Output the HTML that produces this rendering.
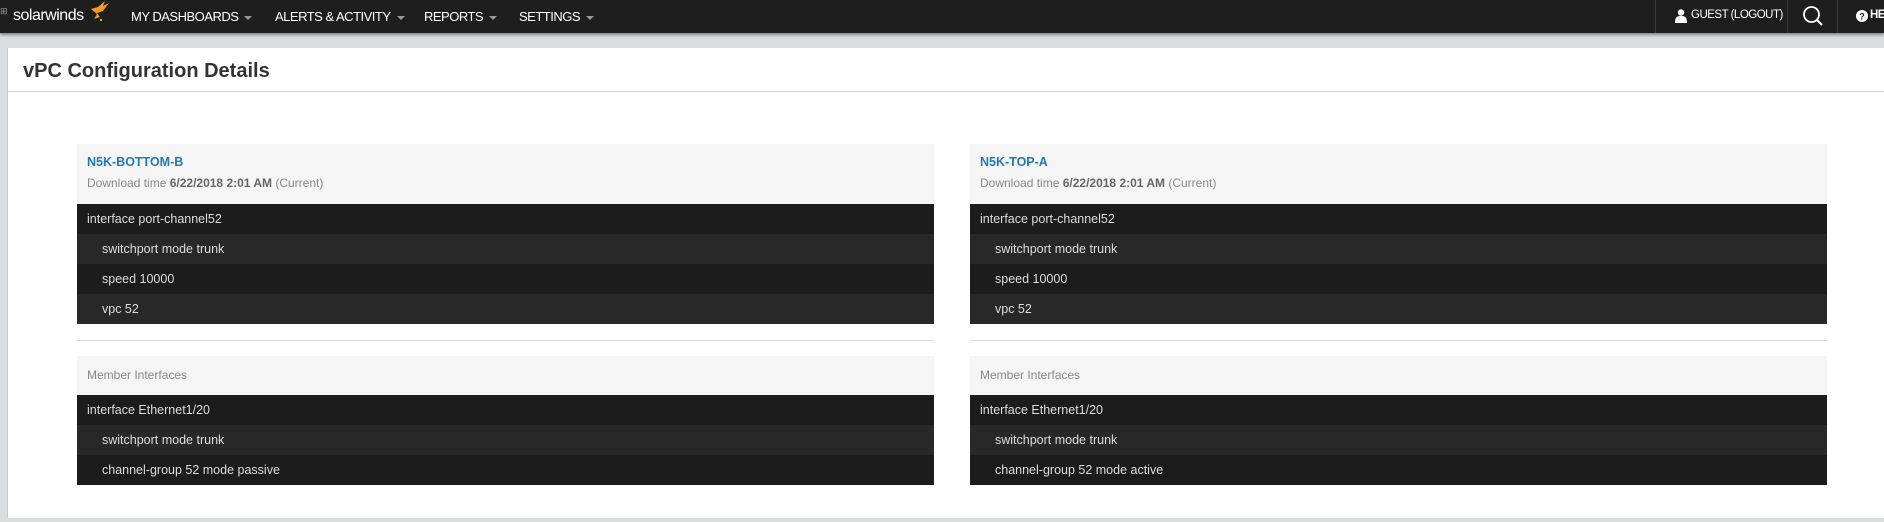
<!DOCTYPE html>
<html><head><meta charset="utf-8"><style>
*{margin:0;padding:0;box-sizing:border-box}
body{width:1884px;height:522px;overflow:hidden;background:#dcdddf;font-family:"Liberation Sans",sans-serif;position:relative}
.nav{position:absolute;left:0;top:0;width:1884px;height:33px;background:#1e1e1e;color:#fff;font-size:13px;box-shadow:0 2px 3px rgba(0,0,0,.4)}
.nav span{position:absolute;top:9px;letter-spacing:-0.5px}
.car{display:inline-block;width:0;height:0;border-left:4px solid transparent;border-right:4px solid transparent;border-top:4px solid #999;margin-left:6px;vertical-align:middle}
.sep{position:absolute;top:0;width:1px;height:33px;background:#3a3a3a}
.card{position:absolute;left:7px;top:48px;width:1877px;height:470px;background:#fff;border-left:1px solid #ccc}
.title{position:absolute;left:15px;top:12px;font-size:20px;font-weight:bold;color:#333}
.hr{position:absolute;left:0;top:43px;width:100%;height:1px;background:#d4d4d4}
.box{position:absolute;top:96px;width:857px}
.hd{height:60px;background:#f5f5f5;padding:11px 10px;font-size:12px;color:#888}
.hd b.n{color:#1f7ab5;font-size:12.5px;display:block;margin-bottom:7px}
.hd b{color:#666}
.row{height:30px;line-height:30px;font-size:12.5px;color:#ddd;padding-left:10px;background:#1c1c1c}
.row.a{background:#282828}
.row.i{padding-left:25px}
.line{height:1px;background:#d6d6d6;margin:16px 0 15px}
.mh{height:39px;background:#f5f5f5;line-height:39px;font-size:12px;color:#888;padding-left:10px}
</style></head><body>
<div class="nav">
<span style="left:0;top:6px;font-size:9px;color:#999">⊞</span>
<span style="left:13px;top:7px;font-size:16px">solarwinds</span>
<svg style="position:absolute;left:88px;top:1px" width="22" height="22" viewBox="0 0 22 22"><path d="M3 8 L10 6 L17 0 L15 5 L21 2 L15 10 L9 12 L12 16 L6 18 L9 13 Z" fill="#f39a1f"/><circle cx="13" cy="19" r="1.2" fill="#f39a1f"/></svg>
<span style="left:131px">MY DASHBOARDS<i class="car"></i></span>
<span style="left:275px">ALERTS &amp; ACTIVITY<i class="car"></i></span>
<span style="left:424px">REPORTS<i class="car"></i></span>
<span style="left:519px">SETTINGS<i class="car"></i></span>
<div class="sep" style="left:1655px"></div>
<svg style="position:absolute;left:1675px;top:9px" width="12" height="14" viewBox="0 0 12 14"><circle cx="6" cy="3.5" r="3.2" fill="#fff"/><path d="M0 14 C0 8 2 7 6 7 C10 7 12 8 12 14Z" fill="#fff"/></svg>
<span style="left:1691px;font-size:11.5px">GUEST (LOGOUT)</span>
<div class="sep" style="left:1787px"></div>
<svg style="position:absolute;left:1802px;top:5px" width="22" height="22" viewBox="0 0 22 22"><circle cx="9.5" cy="9.5" r="7.5" fill="none" stroke="#fff" stroke-width="1.8"/><path d="M15 15 L20 20" stroke="#fff" stroke-width="2"/></svg>
<div class="sep" style="left:1837px"></div>
<svg style="position:absolute;left:1856px;top:10px" width="12" height="12" viewBox="0 0 12 12"><circle cx="6" cy="6" r="6" fill="#fff"/><text x="6" y="9.5" font-size="9" font-weight="bold" text-anchor="middle" fill="#1e1e1e" font-family="Liberation Sans">?</text></svg>
<span style="left:1870px;font-size:11.5px;font-weight:bold">HE</span>
</div>
<div class="card">
<div class="title">vPC Configuration Details</div>
<div class="hr"></div>
<div class="box" style="left:69px">
<div class="hd"><b class="n">N5K-BOTTOM-B</b>Download time <b>6/22/2018 2:01 AM</b> (Current)</div>
<div class="row">interface port-channel52</div>
<div class="row a i">switchport mode trunk</div>
<div class="row i">speed 10000</div>
<div class="row a i">vpc 52</div>
<div class="line"></div>
<div class="mh">Member Interfaces</div>
<div class="row">interface Ethernet1/20</div>
<div class="row a i">switchport mode trunk</div>
<div class="row i">channel-group 52 mode passive</div>
</div>
<div class="box" style="left:962px">
<div class="hd"><b class="n">N5K-TOP-A</b>Download time <b>6/22/2018 2:01 AM</b> (Current)</div>
<div class="row">interface port-channel52</div>
<div class="row a i">switchport mode trunk</div>
<div class="row i">speed 10000</div>
<div class="row a i">vpc 52</div>
<div class="line"></div>
<div class="mh">Member Interfaces</div>
<div class="row">interface Ethernet1/20</div>
<div class="row a i">switchport mode trunk</div>
<div class="row i">channel-group 52 mode active</div>
</div>
</div>
</body></html>
